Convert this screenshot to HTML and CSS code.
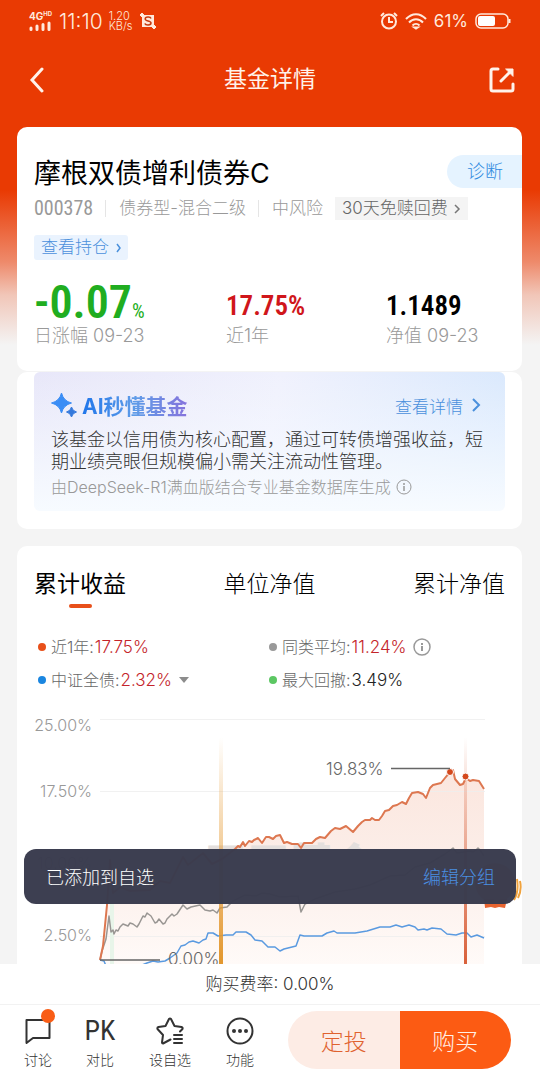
FILE: index.html
```html
<!doctype html>
<html lang="zh-CN">
<head>
<meta charset="utf-8">
<meta name="viewport" content="width=device-width, initial-scale=1">
<title>基金详情</title>
<link rel="stylesheet" href="styles.css">
</head>

<body>
<div class="app">
	<div class="status">
		<div class="signal">
			<span class="signal-type">4G<sup>HD</sup></span>
			<svg width="22" height="10" viewBox="0 0 22 10"><path d="M2 8.500V7M8 8.500V5M14 8.500V3.500M20 8.500V2" stroke="#ffe9dc" stroke-width="3" stroke-linecap="round"/></svg>
		</div>
		<span class="clock">11:10</span>
		<span class="speed">1.20<br>KB/s</span>
		<svg class="shot" width="16" height="16" viewBox="0 0 16 16">
			<path d="M2 2h12v12H2z" fill="#ffe9dc"/>
			<path d="M0 2h4M2 0v4M12 14h4M14 12v4" fill="none" stroke="#ffe9dc" stroke-width="2"/>
			<path d="M11 5.500C10.500 3.500 5.200 3.500 5.200 6c0 2.500 5.800 1.500 5.800 4 0 2.500-5.500 2.500-6 .300" fill="none" stroke="#c63a10" stroke-width="1.500"/>
		</svg>
		<div class="status-right">
			<svg width="18" height="18" viewBox="0 0 18 18" fill="none" stroke="#ffe9dc" stroke-width="2">
				<circle cx="9" cy="9.500" r="7"/><path d="M9 5v5h4M1 4l3-3M17 4l-3-3"/>
			</svg>
			<svg width="22" height="17" viewBox="0 0 22 17" fill="none" stroke="#ffe9dc" stroke-width="2">
				<path d="M1 6C7-.5 15-.5 21 6M4 9.500c4-4.300 10-4.300 14 0M7.500 12.500c2-2 5-2 7 0"/><path d="M9.500 14.500h3l-1.500 1z" fill="#ffe9dc"/>
			</svg>
			<span class="battery-num">61%</span>
			<svg width="36" height="16" viewBox="0 0 36 16">
				<rect x="1" y="1" width="32" height="14" rx="5" fill="none" stroke="#ffe9dc" stroke-width="1.500"/>
				<rect x="3" y="3" width="17" height="10" rx="2" fill="#fff"/>
				<path d="M34.500 6v4" stroke="#ffe9dc" stroke-width="2"/>
			</svg>
		</div>
	</div>

	<header class="nav">
		<button class="icon-btn" aria-label="返回">
			<svg width="22" height="26" viewBox="0 0 22 26" fill="none" stroke="#fff2ea" stroke-width="3" stroke-linecap="round"><path d="M13 2L3 13l10 11"/></svg>
		</button>
		<h1>基金详情</h1>
		<button class="icon-btn" aria-label="分享">
			<svg width="26" height="26" viewBox="0 0 26 26" fill="none" stroke="#fff2ea" stroke-width="3" stroke-linecap="round">
				<path d="M9 2H4Q2 2 2 4v18q0 2 2 2h18q2 0 2-2v-5M12 14L22 4"/><path d="M17 2h7v7z" fill="#fff2ea" stroke-width="1"/>
			</svg>
		</button>
	</header>

	<main class="content">
		<section class="card fund">
			<div class="fund-head">
				<h2>摩根双债增利债券C</h2>
				<a class="diagnose" href="#">诊断</a>
			</div>
			<div class="meta">
				<span class="code">000378</span>
				<span class="kind">债券型-混合二级</span>
				<span class="risk">中风险</span>
				<a class="fee-tag" href="#">30天免赎回费
					<svg width="7" height="10" viewBox="0 0 7 10"><path d="M1 1l4 4-4 4" fill="none" stroke="#777" stroke-width="1.500"/></svg>
				</a>
			</div>
			<a class="holding" href="#">查看持仓
				<svg width="6" height="10" viewBox="0 0 6 10"><path d="M1 1l3 4-3 4" fill="none" stroke="#4a90dc" stroke-width="1.500"/></svg>
			</a>
			<div class="stats">
				<div class="stat">
					<div class="num num-big">-0.07<small>%</small></div>
					<div class="stat-label">日涨幅 09-23</div>
				</div>
				<div class="stat">
					<div class="num num-red">17.75%</div>
					<div class="stat-label">近1年</div>
				</div>
				<div class="stat">
					<div class="num">1.1489</div>
					<div class="stat-label">净值 09-23</div>
				</div>
			</div>
		</section>

		<section class="card ai">
			<div class="ai-panel">
				<div class="ai-head">
					<svg width="26" height="26" viewBox="0 0 26 26">
						<path d="M10.500 1Q12.500 9 20.500 11Q12.500 13 10.500 21Q8.500 13 .5 11Q8.500 9 10.500 1z" fill="#3b8df5" stroke="#3b8df5" stroke-linejoin="round"/>
						<path d="M20.500 15Q21.500 19 25.500 20Q21.500 21 20.500 25Q19.500 21 15.500 20Q19.500 19 20.500 15z" fill="#3579dc" stroke="#3579dc" stroke-linejoin="round"/>
					</svg>
					<h3>AI秒懂基金</h3>
					<a class="ai-more" href="#">查看详情
						<svg width="9" height="14" viewBox="0 0 9 14"><path d="M1 1l6 6-6 6" fill="none" stroke="#4a90dc" stroke-width="2"/></svg>
					</a>
				</div>
				<p class="ai-text">该基金以信用债为核心配置，通过可转债增强收益，短期业绩亮眼但规模偏小需关注流动性管理。</p>
				<p class="ai-source">由DeepSeek-R1满血版结合专业基金数据库生成
					<svg width="16" height="16" viewBox="0 0 16 16" fill="none" stroke="#999"><circle cx="8" cy="8" r="7"/><path d="M8 7v5M8 4v2" stroke-width="1.500"/></svg>
				</p>
			</div>
		</section>

		<section class="card trend">
			<div class="tabs">
				<button class="tab active">累计收益</button>
				<button class="tab">单位净值</button>
				<button class="tab">累计净值</button>
			</div>
			<div class="legend">
				<div class="legend-item"><i class="dot dot-orange"></i>近1年:<b>17.75%</b></div>
				<div class="legend-item"><i class="dot dot-gray"></i>同类平均:<b>11.24%</b>
					<svg class="info" width="18" height="18" viewBox="0 0 18 18" fill="none" stroke="#999" stroke-width="1.500"><circle cx="9" cy="9" r="8"/><path d="M9 8v5M9 5v2" stroke-width="2"/></svg>
				</div>
				<div class="legend-item"><i class="dot dot-blue"></i>中证全债:<b>2.32%</b>
					<svg class="caret" width="10" height="6" viewBox="0 0 10 6"><path d="M0 0h10L5 6z" fill="#8c8c8c"/></svg>
				</div>
				<div class="legend-item"><i class="dot dot-green"></i>最大回撤:<b class="dark">3.49%</b></div>
			</div>

			<svg class="chart" viewBox="34 706 488 290">
				<defs>
					<linearGradient id="area" x1="0" y1="769" x2="0" y2="970" gradientUnits="userSpaceOnUse">
						<stop offset="0" stop-color="#fbe6de"/><stop offset=".5" stop-color="#fcefea"/><stop offset="1" stop-color="#fffbf9"/>
					</linearGradient>
					<linearGradient id="yellowBar" x1="0" y1="736" x2="0" y2="960" gradientUnits="userSpaceOnUse">
						<stop offset="0" stop-color="#e79b35" stop-opacity="0"/><stop offset="1" stop-color="#e3982f"/>
					</linearGradient>
					<linearGradient id="redBar" x1="0" y1="736" x2="0" y2="960" gradientUnits="userSpaceOnUse">
						<stop offset="0" stop-color="#d9623c" stop-opacity="0"/><stop offset="1" stop-color="#d9623c"/>
					</linearGradient>
				</defs>
				<path fill="url(#area)" d="M100 959L107 904 110 859 113 892 120 886 130 890 150 889 160 880 170 882 183 856 188 864 203 852 212 863 222 858 235 848 240 843 245 844 252 839 258 837 262 842 268 836 273 838 280 834 284 842 292 843 298 843 301 847 304 842 312 842 320 836 325 837 335 827 340 828 346 825 353 831 362 821 370 818 379 819 385 810 393 805 402 801 406 803 412 792 418 791 423 793 426 797 430 787 433 784 441 782 445 777 450 771 453 769 455 778 460 784 463 783 466 777 470 780 473 779 479 780 484 788V996H100z"/>
				<path stroke="#eee" d="M100 718.500H485M100 790.500H485M100 862.500H485M100 935.500H485" stroke-opacity=".8"/>
				<text class="watermark" x="204" y="879">天天基金</text>
				<path fill="#e8f5e9" d="M110 860h4v136h-4z"/>
				<g class="axis">
					<text x="92" y="730">25.00%</text>
					<text x="92" y="796">17.50%</text>
					<text x="92" y="868">10.00%</text>
					<text x="92" y="940">2.50%</text>
				</g>
				<path class="line" stroke="#999693" d="M100 959L102 950 106 938 109 915 111 931 113 929 114 933 116 929 118 930 120 926 123 923 128 925 130 922 133 923 137 926 139 923 143 915 145 916 147 912 151 915 155 922 157 921 159 918 163 923 165 922 167 918 172 913 174 915 177 913 183 904 187 908 191 906 200 904 205 909 210 910 213 909 217 912 220 907 227 906 233 900 245 894 256 895 262 892 270 893 280 896 298 895 301 911 305 903 315 898 335 891 355 888 370 884 390 875 405 874 415 866 430 862 445 853 453 847 457 852 470 850 473 851 476 849 478 847 480 849 484 855"/>
				<path class="line" stroke="#5a9ae0" d="M100 959L104 960 106 965 112 967 135 966 142 964 147 962 153 960 158 961 165 960 170 957 177 952 181 945 185 944 189 941 193 940 199 942 203 939 206 938 208 932 213 932 218 935 226 934 233 934 236 931 246 931 251 934 255 939 262 940 265 943 268 946 275 946 280 950 284 948 288 947 296 945 300 934 304 935 322 935 327 932 334 930 337 932 355 932 367 930 380 926 390 926 396 924 402 926 409 924 415 926 418 929 424 928 427 929 432 927 441 928 447 933 456 934 462 932 467 932 471 936 477 934 484 937"/>
				<path fill="url(#yellowBar)" d="M219 736h4v260h-4z"/>
				<path fill="url(#redBar)" d="M464 736h3v260h-3z"/>
				<path class="line line-main" d="M100 959L103 945 107 904 110 859 113 892 120 886 130 890 150 889 160 880 170 882 183 856 188 864 203 852 212 863 222 858 235 848 238 845 240 846 243 841 245 845 249 840 252 841 254 839 258 837 262 842 266 836 269 836 273 838 276 835 280 834 284 842 287 841 292 843 298 843 301 847 304 842 312 842 316 838 320 836 325 837 331 830 335 827 340 828 346 825 353 831 358 825 362 821 365 819 370 819 372 817 375 819 379 819 382 815 385 810 389 809 393 805 397 804 402 801 406 803 409 797 412 792 418 791 423 793 426 797 430 787 433 784 441 782 445 777 450 771 453 769 455 778 460 784 463 783 466 777 470 780 473 779 479 780 484 788"/>
				<circle cx="450" cy="771" r="3.500" class="mark"/>
				<circle cx="465.500" cy="775.500" r="3.500" class="mark"/>
				<path stroke="#666" stroke-width="1.500" d="M391 767.500H450M100 959H160"/>
				<text class="tip" x="326" y="774">19.83%</text>
				<text class="tip" x="168" y="964">0.00%</text>
				<!-- 吉祥物 -->
				<g>
					<circle cx="495" cy="882" r="20" fill="#f2a079"/>
					<path fill="#e86430" d="M484 898h10l2 4 4-4h7l-2 9-6-1-4 1-4-1-6 1z"/>
					<path fill="none" stroke="#f0a23c" stroke-width="2" d="M514 899q5-8 3-21M518 897q4-8 2-17"/>
				</g>
			</svg>
		</section>
	</main>

	<footer class="footer">
		<div class="rate">购买费率: 0.00%</div>
		<div class="toolbar">
			<div class="tools">
				<button class="tool">
					<span class="tool-icon">
						<svg width="26" height="26" viewBox="0 0 26 26" fill="none" stroke="#333" stroke-width="2" stroke-linejoin="round"><path d="M1.500 2h23v18H8l-6.500 5z"/></svg>
						<i class="badge"></i>
					</span>讨论
				</button>
				<button class="tool"><span class="tool-icon pk">PK</span>对比</button>
				<button class="tool">
					<span class="tool-icon">
						<svg width="28" height="28" viewBox="0 0 28 28" fill="none" stroke="#333" stroke-width="2" stroke-linejoin="round" stroke-linecap="round">
							<path d="M14.500 22.500L7 26.500q-1 0-1-1L7 18 1.500 12q-.5-1.500 1-2l7-1L13 2q1-1 2 0l3.500 7 7 1q1.500.5 1 2L24 14.500"/><path d="M18 18h8M18 22h8M18 26h8"/>
						</svg>
					</span>设自选
				</button>
				<button class="tool">
					<span class="tool-icon">
						<svg width="28" height="28" viewBox="0 0 28 28"><circle cx="14" cy="14" r="12.500" fill="none" stroke="#333" stroke-width="2"/><g fill="#333"><circle cx="8" cy="14" r="2"/><circle cx="14" cy="14" r="2"/><circle cx="20" cy="14" r="2"/></g></svg>
					</span>功能
				</button>
			</div>
			<div class="actions">
				<button class="plan">定投</button>
				<button class="buy">购买</button>
			</div>
		</div>
	</footer>

	<div class="toast" role="status">
		<span>已添加到自选</span>
		<a href="#">编辑分组</a>
	</div>
</div>
</body>
</html>
```
FILE: styles.css
```css
*{
	box-sizing: border-box;
}
body{
	margin: 0;
	font-family: Inter, "Noto Sans CJK SC", sans-serif;
	font-weight: 300;
	color: #333;
}
h1,h2,h3,p{
	margin: 0;
}
a{
	text-decoration: none;
}
button{
	border: none;
	padding: 0;
	background: none;
	font: inherit;
	color: inherit;
	cursor: pointer;
}
svg{
	flex: none;
}
.app{
	position: relative;
	display: flex;
	flex-direction: column;
	height: 100vh;
	overflow: hidden;
	background: linear-gradient(#e93a03 190px, #ee8a6b 262px, #f1c6b8 295px, #f4f4f4 345px);
}

/* 状态栏 */
.status{
	display: flex;
	align-items: center;
	height: 42px;
	padding: 0 29px;
	color: #ffe9dc;
}
.signal{
	display: flex;
	flex-direction: column;
	width: 24px;
	margin-right: 6px;
}
.signal-type{
	font-size: 10px;
	font-weight: 700;
	line-height: 10px;
	white-space: nowrap;
}
.signal-type sup{
	font-size: 6px;
	line-height: 6px;
}
.clock{
	font-size: 21px;
}
.speed{
	margin: 0 8px 0 6px;
	font-size: 11px;
	line-height: 10px;
}
.status-right{
	display: flex;
	align-items: center;
	gap: 7px;
	margin-left: auto;
}
.battery-num{
	font-size: 17px;
	font-weight: 400;
}

.nav{
	display: flex;
	align-items: center;
	justify-content: space-between;
	height: 76px;
	padding: 0 25px 0 29px;
	color: #fff2ea;
}
.nav h1{
	font-size: 23px;
	font-weight: 400;
	line-height: 28px;
	padding-bottom: 2px;
}
.icon-btn{
	display: flex;
	align-items: center;
}

.content{
	flex: 1;
	min-height: 0;
	overflow: hidden;
	padding: 9px 18px 0 17px;
}
.card{
	background: #fff;
	border-radius: 10px;
}

/* 基金信息 */
.fund{
	padding: 26px 17px 22px;
	margin-bottom: 1px;
}
.fund-head{
	display: flex;
	align-items: center;
	justify-content: space-between;
	height: 36px;
}
.fund-head h2{
	font-size: 27px;
	font-weight: 400;
	color: #000;
}
.diagnose{
	margin-right: -17px;
	padding: 0 19px 0 20px;
	border-radius: 17px 0 0 17px;
	background: #e5f3ff;
	font-size: 18px;
	line-height: 33px;
	color: #2f8ae0;
}
.meta{
	display: flex;
	align-items: center;
	height: 23px;
	margin-top: 8px;
	font-size: 17px;
	line-height: 17px;
	color: #999;
}
.code{
	font-family: "Roboto Condensed", Roboto, sans-serif;
	font-size: 20px;
	font-weight: 400;
}
.kind,.risk{
	margin-left: 12px;
	padding-left: 13px;
	border-left: 1px solid #e5e5e5;
}
.fee-tag{
	display: flex;
	align-items: center;
	gap: 6px;
	margin-left: 12px;
	padding: 0 7px;
	background: #f4f4f4;
	line-height: 23px;
	color: #666;
}
.holding{
	display: inline-flex;
	align-items: center;
	gap: 7px;
	margin-top: 15px;
	padding: 0 6px 0 7px;
	border-radius: 3px;
	background: #eaf3fe;
	font-size: 17px;
	line-height: 25px;
	color: #4a90dc;
	vertical-align: top;
}
.stats{
	display: grid;
	grid-template-columns: 192fr 160fr 119fr;
	margin-top: 23px;
}
.num{
	height: 40px;
	font-family: "Roboto Condensed", Roboto, sans-serif;
	font-size: 27px;
	font-weight: 600;
	line-height: 46px;
	color: #000;
}
.num-red{
	color: #d0161b;
}
.num-big{
	font-size: 46px;
	line-height: 38px;
	color: #20ad20;
}
.num-big small{
	font-size: 20px;
	font-weight: 400;
}
.stat-label{
	font-size: 18px;
	line-height: 26px;
	color: #999;
}

/* AI解读 */
.ai{
	padding: 0 17px 18px;
	margin-bottom: 17px;
}
.ai-panel{
	padding: 19px 8px 13px 17px;
	border-radius: 6px;
	background: linear-gradient(rgba(255,255,255,0), #f7fbff), linear-gradient(100deg, #e8e7f9, #f0f1fd 50%, #d8e8fd);
}
.ai-head{
	display: flex;
	align-items: center;
	height: 28px;
}
.ai-head h3{
	margin-left: 5px;
	font-size: 21px;
	font-weight: 700;
	background: linear-gradient(90deg, #2076ea, #5f9ce8 50%, #8673dc);
	-webkit-background-clip: text;
	background-clip: text;
	color: transparent;
}
.ai-more{
	display: flex;
	align-items: center;
	gap: 9px;
	margin: 0 16px 0 auto;
	font-size: 17px;
	color: #4a90dc;
}
.ai-text{
	margin-top: 10px;
	font-size: 18px;
	line-height: 22px;
}
.ai-source{
	display: flex;
	align-items: center;
	gap: 5px;
	margin-top: 3px;
	font-size: 16px;
	line-height: 22px;
	color: #999;
}

/* 走势 */
.trend{
	padding: 21px 0 0 17px;
}
.tabs{
	display: flex;
	justify-content: space-between;
	padding-right: 17px;
}
.tab{
	font-size: 23px;
	line-height: 34px;
	color: #000;
}
.tab::after{
	content: "";
	display: block;
	width: 23px;
	height: 4px;
	margin: 3px auto 0;
	border-radius: 2px;
}
.active{
	font-weight: 400;
}
.active::after{
	background: #e8501a;
}
.legend{
	display: grid;
	grid-template-columns: 231fr 253fr;
	row-gap: 9px;
	margin-top: 27px;
	padding-left: 4px;
	font-size: 16px;
	line-height: 24px;
	color: #666;
}
.legend-item{
	display: flex;
	align-items: center;
}
.legend b{
	margin-left: 1px;
	font-size: 17px;
	font-weight: 300;
	color: #c4242a;
}
.legend .dark{
	color: #222;
}
.dot{
	width: 8px;
	height: 8px;
	margin-right: 5px;
	border-radius: 50%;
}
.dot-orange{
	background: #e8501a;
}
.dot-gray{
	background: #999;
}
.dot-blue{
	background: #1a86e0;
}
.dot-green{
	background: #5cc763;
}
.info{
	margin-left: 6px;
}
.caret{
	margin-left: 7px;
}
.chart{
	display: block;
	width: 100%;
	margin-top: 15px;
}
.chart text{
	font-size: 16px;
}
.axis{
	fill: #999;
	text-anchor: end;
}
.chart .tip{
	font-size: 17px;
	fill: #666;
}
.chart .watermark{
	font-size: 43px;
	font-weight: 900;
	fill: #e4dfdd;
}
.line{
	fill: none;
	stroke-width: 1.5px;
	stroke-linejoin: round;
}
.line-main{
	stroke: #dd7750;
	stroke-width: 2px;
}
.mark{
	fill: #d4481c;
	stroke: #fff;
}

/* 底部 */
.footer{
	background: #fff;
}
.rate{
	height: 41px;
	border-bottom: 1px solid #f2f2f2;
	font-size: 17px;
	line-height: 40px;
	text-align: center;
}
.toolbar{
	display: flex;
	padding: 6px 29px 8px 7px;
	gap: 17px;
}
.tools{
	flex: 1;
	display: grid;
	grid-template-columns: 62fr 62fr 78fr 62fr;
}
.tool{
	display: flex;
	flex-direction: column;
	align-items: center;
	font-size: 14px;
	line-height: 18px;
}
.tool-icon{
	position: relative;
	display: flex;
	align-items: center;
	justify-content: center;
	height: 40px;
}
.pk{
	font-family: "Roboto Condensed", Roboto, sans-serif;
	font-size: 28px;
	font-weight: 400;
}
.badge{
	position: absolute;
	top: -2px;
	right: -4px;
	width: 14px;
	height: 14px;
	border-radius: 50%;
	background: #f95d16;
}
.actions{
	display: flex;
	width: 223px;
	height: 58px;
	border-radius: 29px;
	overflow: hidden;
	font-size: 23px;
}
.actions button{
	flex: 1;
}
.plan{
	background: #fdece5;
	color: #e0622f;
}
.buy{
	background: #fc5b13;
	color: #fff0e6;
}

.toast{
	position: absolute;
	left: 24px;
	right: 24px;
	bottom: 173px;
	display: flex;
	align-items: center;
	justify-content: space-between;
	height: 55px;
	padding: 0 21px 2px 22px;
	border-radius: 12px;
	background: rgba(57,59,78,.98);
	font-size: 18px;
	color: #fff;
}
.toast a{
	color: #4a8fe2;
}
```
